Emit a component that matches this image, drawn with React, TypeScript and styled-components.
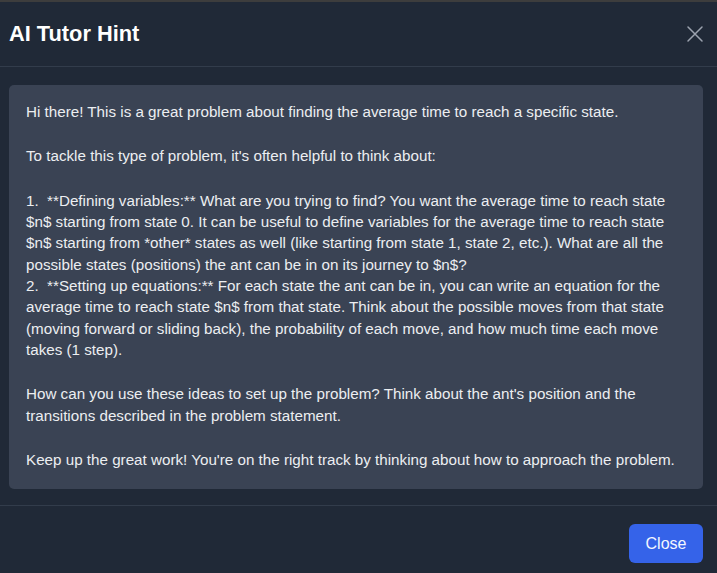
import React from "react";
import styled, { createGlobalStyle } from "styled-components";

const GlobalStyle = createGlobalStyle`
  html, body {
    margin: 0;
    padding: 0;
    height: 100%;
    overflow: hidden;
    background: #3d3d3d;
    font-family: "Liberation Sans", Arial, sans-serif;
  }
`;

const Backdrop = styled.div`
  height: 573px;
  padding-top: 2px;
  box-sizing: border-box;
  overflow: hidden;
`;

const Modal = styled.div`
  background: #202937;
  height: 100%;
  display: flex;
  flex-direction: column;
  color: #e5e7eb;

  & > * {
    flex-shrink: 0;
  }
`;

const Header = styled.header`
  display: flex;
  align-items: center;
  justify-content: space-between;
  height: 65px;
  padding: 0 12px 1px 9px;
  border-bottom: 1px solid #323c4b;
  box-sizing: border-box;
`;

const Title = styled.h2`
  margin: 0;
  font-size: 21.8px;
  font-weight: bold;
  color: #ffffff;
`;

const IconButton = styled.button`
  background: none;
  border: none;
  padding: 0;
  color: #9ca3af;
  display: flex;
  cursor: pointer;
`;

const Body = styled.div`
  padding: 18px 14px 16px 9px;
  border-bottom: 1px solid #323c4b;
`;

const HintBox = styled.div`
  background: #3a4354;
  border-radius: 5px;
  padding: 16px 16px 19px 17px;
  font-size: 15.2px;
  line-height: 21.3px;
  color: #eceef1;
`;

const Paragraph = styled.p`
  margin: 0 0 23.1px;
  white-space: pre-wrap;

  &:last-child {
    margin-bottom: 0;
  }
`;

const Footer = styled.footer`
  display: flex;
  justify-content: flex-end;
  padding: 18px 14px;
`;

const PrimaryButton = styled.button`
  background: #3563e9;
  color: #f3f6ff;
  border: none;
  border-radius: 6px;
  width: 74px;
  height: 39px;
  font-family: "Liberation Sans", Arial, sans-serif;
  font-size: 16px;
  cursor: pointer;
`;

const paragraphs = [
  "Hi there! This is a great problem about finding the average time to reach a specific state.",
  "To tackle this type of problem, it's often helpful to think about:",
  `1.  **Defining variables:** What are you trying to find? You want the average time to reach state $n$ starting from state 0. It can be useful to define variables for the average time to reach state $n$ starting from *other* states as well (like starting from state 1, state 2, etc.). What are all the possible states (positions) the ant can be in on its journey to $n$?
2.  **Setting up equations:** For each state the ant can be in, you can write an equation for the average time to reach state $n$ from that state. Think about the possible moves from that state (moving forward or sliding back), the probability of each move, and how much time each move takes (1 step).`,
  "How can you use these ideas to set up the problem? Think about the ant's position and the transitions described in the problem statement.",
  "Keep up the great work! You're on the right track by thinking about how to approach the problem.",
];

const App: React.FC = () => {
  return (
    <>
      <GlobalStyle />
      <Backdrop>
        <Modal>
          <Header>
            <Title>AI Tutor Hint</Title>
            <IconButton aria-label="Close">
              <svg width="20" height="20" viewBox="0 0 20 20" fill="none" stroke="currentColor" strokeWidth="1.5" strokeLinecap="round">
                <path d="M3 3L17 17M17 3L3 17" />
              </svg>
            </IconButton>
          </Header>
          <Body>
            <HintBox>
              {paragraphs.map((text, i) => (
                <Paragraph key={i}>{text}</Paragraph>
              ))}
            </HintBox>
          </Body>
          <Footer>
            <PrimaryButton>Close</PrimaryButton>
          </Footer>
        </Modal>
      </Backdrop>
    </>
  );
};

export default App;
